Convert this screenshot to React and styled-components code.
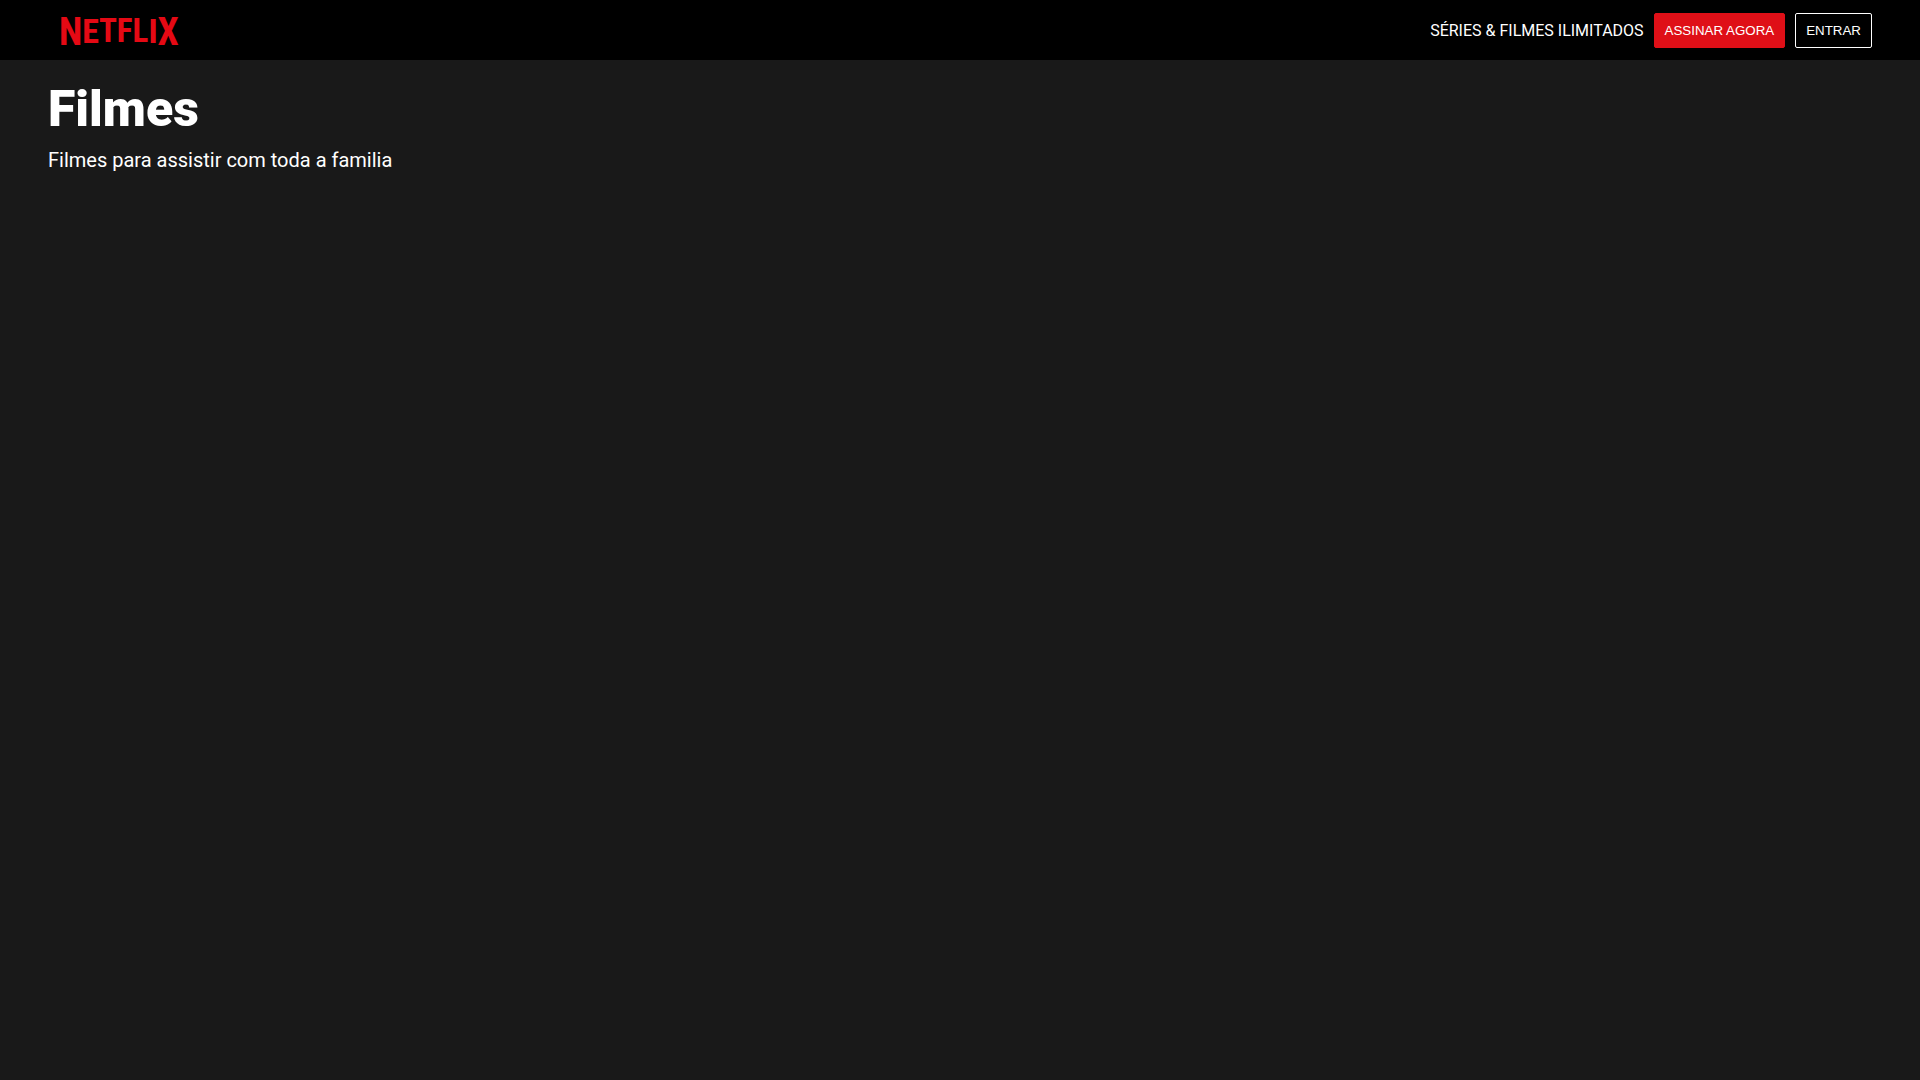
import React from "react";
import styled, { createGlobalStyle } from "styled-components";

const GlobalStyle = createGlobalStyle`
  * {
    margin: 0;
    padding: 0;
    box-sizing: border-box;
  }

  body {
    min-height: 100vh;
    background: #191919;
    color: #fff;
    font-family: Roboto, sans-serif;
  }
`

const Header = styled.header`
  display: flex;
  align-items: center;
  justify-content: space-between;
  height: 60px;
  padding: 0 48px;
  background: #000;
`

const LogoLink = styled.a`
  display: block;
  padding: 0 10px;
  text-decoration: none;

  svg {
    display: block;
  }

  text {
    fill: #e50914;
    font-family: "Roboto Condensed", "Liberation Sans Narrow", "Liberation Sans", sans-serif;
    font-weight: 700;
  }
`

const Nav = styled.nav`
  display: flex;
  align-items: center;
  gap: 10px;
`

const Button = styled.button`
  height: 35px;
  padding: 0 10px;
  border: 1px solid ${(props) => (props.$primary ? "#df0f17" : "#fff")};
  border-radius: 2px;
  background: ${(props) => (props.$primary ? "#df0f17" : "transparent")};
  color: #fff;
  font-family: "Liberation Sans", Arial, sans-serif;
  text-transform: uppercase;
  cursor: pointer;
`

const Main = styled.main`
  padding: 20px 48px;
`

const Title = styled.h1`
  font-size: 50px;
  font-weight: 900;
  line-height: 58px;
`

const Subtitle = styled.p`
  margin-top: 10px;
  font-size: 20px;
  line-height: 24px;
`

// flat top edge, the outer letters hang lower than the middle ones
const Logo = () => (
  <LogoLink href="#" aria-label="Netflix">
    <svg width="132" height="48" viewBox="0 0 132 48">
      <text x="1">
        <tspan y="39" fontSize="38">N</tspan>
        <tspan y="37" fontSize="34">E</tspan>
        <tspan y="36" fontSize="33">TFL</tspan>
        <tspan y="37" fontSize="34">I</tspan>
        <tspan y="39" fontSize="38">X</tspan>
      </text>
    </svg>
  </LogoLink>
)

export default function App() {
  return (
    <>
      <GlobalStyle />
      <Header>
        <Logo />
        <Nav>
          <span>SÉRIES & FILMES ILIMITADOS</span>
          <Button $primary>Assinar agora</Button>
          <Button>Entrar</Button>
        </Nav>
      </Header>
      <Main>
        <Title>Filmes</Title>
        <Subtitle>Filmes para assistir com toda a familia</Subtitle>
      </Main>
    </>
  )
}
